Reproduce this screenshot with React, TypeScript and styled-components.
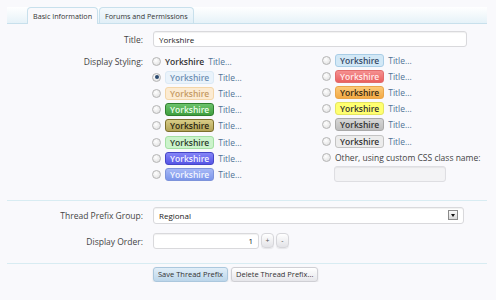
import React from "react";
import styled, { createGlobalStyle, css } from "styled-components";

const GlobalStyle = createGlobalStyle`
  html, body {
    margin: 0;
    padding: 0;
    background: #f9f9fc;
  }
  body {
    font-family: "Open Sans", "Liberation Sans", sans-serif;
    font-size: 8px;
    color: #333;
  }
`;

type PrefixKind =
  | "plain"
  | "lightBlue"
  | "lightOrange"
  | "green"
  | "olive"
  | "lightGreen"
  | "royalBlue"
  | "skyBlue"
  | "paleBlue"
  | "red"
  | "orange"
  | "yellow"
  | "gray"
  | "silver";

const prefixStyles: Record<PrefixKind, ReturnType<typeof css>> = {
  plain: css`
    padding: 0;
    border: none;
    background: none;
    color: #333;
  `,
  lightBlue: css`
    background: #eaf3fb;
    border-color: #dbe9f5;
    color: #6e90b4;
  `,
  lightOrange: css`
    background: #fcebd2;
    border-color: #f4d6a8;
    color: #c59a63;
  `,
  green: css`
    background: linear-gradient(#6cc36c, #3f9f3f);
    border-color: #2f7f2f;
    color: #eaffea;
  `,
  olive: css`
    background: linear-gradient(#d8cc86, #b3a457);
    border-color: #7c6f2c;
    color: #2b2610;
  `,
  lightGreen: css`
    background: #cbf3cb;
    border-color: #a3e0a3;
    color: #2b3b2b;
  `,
  royalBlue: css`
    background: linear-gradient(#8585f7, #5555e6);
    border-color: #4545c6;
    color: #f2f2ff;
  `,
  skyBlue: css`
    background: linear-gradient(#a6b8f6, #7b95ea);
    border-color: #7d93da;
    color: #f2f5ff;
  `,
  paleBlue: css`
    background: #d2e8f6;
    border-color: #a9cde6;
    color: #364a66;
  `,
  red: css`
    background: linear-gradient(#f59090, #e96060);
    border-color: #e26b6b;
    color: #ffecec;
  `,
  orange: css`
    background: linear-gradient(#fbc978, #f3aa45);
    border-color: #eaa64a;
    color: #3a2a10;
  `,
  yellow: css`
    background: #ffff70;
    border-color: #e5e560;
    color: #333;
  `,
  gray: css`
    background: linear-gradient(#d6d6d6, #bdbdbd);
    border-color: #a9a9a9;
    color: #333;
  `,
  silver: css`
    background: #ececec;
    border-color: #c3c3c3;
    color: #333;
  `,
};

const Page = styled.div`
  padding: 7px 9px 0 7px;
`;

const TabStrip = styled.ul`
  display: flex;
  margin: 0;
  padding: 0 0 0 20px;
  list-style: none;
  height: 16px;
  background: linear-gradient(#ffffff, #e6f2f8);
  border-bottom: 1px solid #c8e0ec;
`;

const Tab = styled.li<{ active?: boolean }>`
  display: flex;
  align-items: center;
  padding: 0 5px;
  margin-right: 1px;
  border: 1px solid #c8e0ec;
  border-bottom: none;
  border-radius: 4px 4px 0 0;
  font-size: 7.2px;
  color: #333;
  box-sizing: border-box;
  background: ${(p) =>
    p.active ? "#f9f9fc" : "linear-gradient(#f4f9fc, #e1eff7)"};
  height: ${(p) => (p.active ? "17px" : "16px")};
`;

const Form = styled.div`
  padding-top: 7px;
`;

const FormRow = styled.div<{ top?: number }>`
  display: grid;
  grid-template-columns: 136px 1fr;
  column-gap: 10px;
  margin-top: ${(p) => p.top ?? 0}px;
`;

const Label = styled.div<{ pad?: number }>`
  text-align: right;
  font-size: 8.5px;
  color: #444;
  padding-top: ${(p) => p.pad ?? 3}px;
`;

const TextInput = styled.div<{ width?: number }>`
  box-sizing: border-box;
  height: 16px;
  width: ${(p) => (p.width ? `${p.width}px` : "auto")};
  background: #fff;
  border: 1px solid #d9d9dc;
  border-radius: 3px;
  box-shadow: inset 0 1px 1px rgba(0, 0, 0, 0.06);
  padding: 0 5px;
  display: flex;
  align-items: center;
  font-size: 8px;
  color: #222;
`;

const TitleInput = styled(TextInput)`
  margin-right: 20px;
`;

const StyleGrid = styled.div`
  display: grid;
  grid-template-columns: 170px 1fr;
`;

const OptionColumn = styled.div<{ shift?: number }>`
  display: flex;
  flex-direction: column;
  margin-top: ${(p) => p.shift ?? 0}px;
`;

const Option = styled.label`
  display: flex;
  align-items: center;
  height: 16.2px;
  gap: 4px;
  white-space: nowrap;
`;

const Radio = styled.span<{ checked?: boolean }>`
  box-sizing: border-box;
  width: 9px;
  height: 9px;
  border-radius: 50%;
  border: 1px solid #b5b5b5;
  background: radial-gradient(circle at 40% 35%, #ffffff, #dcdcdc);
  flex: none;
  display: flex;
  align-items: center;
  justify-content: center;
  margin-left: -1px;

  &::after {
    content: "";
    display: ${(p) => (p.checked ? "block" : "none")};
    width: 4px;
    height: 4px;
    border-radius: 50%;
    background: #2a4a70;
  }
`;

const Prefix = styled.span<{ kind: PrefixKind }>`
  box-sizing: border-box;
  display: inline-flex;
  align-items: center;
  height: 13px;
  padding: 0 4px;
  border: 1px solid transparent;
  border-radius: 3px;
  font-size: 8.5px;
  font-weight: 600;
  ${(p) => prefixStyles[p.kind]}
`;

const TitleText = styled.span`
  font-size: 8.5px;
  color: #4f7395;
`;

const OtherText = styled.span`
  font-size: 8.5px;
  color: #444;
`;

const CustomClassInput = styled(TextInput)`
  margin: 1px 0 0 11px;
  width: 112px;
  background: #f3f3f5;
  border-color: #dedee2;
`;

const Separator = styled.hr<{ top: number }>`
  border: none;
  border-top: 1px solid #d8ecf2;
  margin: ${(p) => p.top}px 0 0 0;
`;

const SelectBox = styled(TextInput)`
  width: 311px;
  justify-content: space-between;
  padding-right: 5px;
  height: 17px;
`;

const SelectArrow = styled.span`
  box-sizing: border-box;
  width: 10px;
  height: 10px;
  border: 1px solid #8a8a8a;
  background: linear-gradient(#fafafa, #d8d8d8);
  display: flex;
  align-items: center;
  justify-content: center;

  &::after {
    content: "";
    border-left: 2.5px solid transparent;
    border-right: 2.5px solid transparent;
    border-top: 3px solid #111;
  }
`;

const SpinRow = styled.div`
  display: flex;
  align-items: center;
  gap: 2px;
`;

const NumberInput = styled(TextInput)`
  justify-content: flex-end;
  width: 106px;
`;

const SpinButton = styled.span`
  box-sizing: border-box;
  width: 13px;
  height: 15px;
  border: 1px solid #d6d6da;
  border-radius: 4px;
  background: linear-gradient(#ffffff, #e3e3e7);
  display: flex;
  align-items: center;
  justify-content: center;
  font-size: 7px;
  color: #555;
  box-shadow: 0 1px 1px rgba(0, 0, 0, 0.08);
`;

const ButtonRow = styled.div`
  display: flex;
  gap: 3px;
  margin: 3px 0 0 146px;
`;

const Button = styled.span<{ primary?: boolean }>`
  box-sizing: border-box;
  height: 15px;
  padding: 0 4px;
  display: flex;
  align-items: center;
  border-radius: 3px;
  font-size: 7.5px;
  color: #333;
  border: 1px solid ${(p) => (p.primary ? "#abc7dd" : "#cfcfd4")};
  background: ${(p) =>
    p.primary
      ? "linear-gradient(#e1eef8, #bcd6ea)"
      : "linear-gradient(#ffffff, #e6e6ea)"};
  box-shadow: 0 1px 2px rgba(0, 0, 0, 0.12);
`;

const leftOptions: PrefixKind[] = [
  "plain",
  "lightBlue",
  "lightOrange",
  "green",
  "olive",
  "lightGreen",
  "royalBlue",
  "skyBlue",
];

const rightOptions: PrefixKind[] = [
  "paleBlue",
  "red",
  "orange",
  "yellow",
  "gray",
  "silver",
];

const StyleOption = ({
  kind,
  checked,
}: {
  kind: PrefixKind;
  checked?: boolean;
}) => (
  <Option>
    <Radio checked={checked} />
    <Prefix kind={kind}>Yorkshire</Prefix>
    <TitleText>Title...</TitleText>
  </Option>
);

export default function App() {
  return (
    <Page>
      <GlobalStyle />
      <TabStrip>
        <Tab active>Basic Information</Tab>
        <Tab>Forums and Permissions</Tab>
      </TabStrip>

      <Form>
        <FormRow>
          <Label>Title:</Label>
          <TitleInput>Yorkshire</TitleInput>
        </FormRow>

        <FormRow top={7}>
          <Label pad={2}>Display Styling:</Label>
          <StyleGrid>
            <OptionColumn shift={-1}>
              {leftOptions.map((kind, i) => (
                <StyleOption key={kind} kind={kind} checked={i === 1} />
              ))}
            </OptionColumn>
            <OptionColumn shift={-2}>
              {rightOptions.map((kind) => (
                <StyleOption key={kind} kind={kind} />
              ))}
              <Option>
                <Radio />
                <OtherText>Other, using custom CSS class name:</OtherText>
              </Option>
              <CustomClassInput />
            </OptionColumn>
          </StyleGrid>
        </FormRow>

        <Separator top={17} />

        <FormRow top={6}>
          <Label>Thread Prefix Group:</Label>
          <SelectBox>
            Regional
            <SelectArrow />
          </SelectBox>
        </FormRow>

        <FormRow top={9}>
          <Label>Display Order:</Label>
          <SpinRow>
            <NumberInput>1</NumberInput>
            <SpinButton>+</SpinButton>
            <SpinButton>-</SpinButton>
          </SpinRow>
        </FormRow>

        <Separator top={14} />

        <ButtonRow>
          <Button primary>Save Thread Prefix</Button>
          <Button>Delete Thread Prefix...</Button>
        </ButtonRow>
      </Form>
    </Page>
  );
}
